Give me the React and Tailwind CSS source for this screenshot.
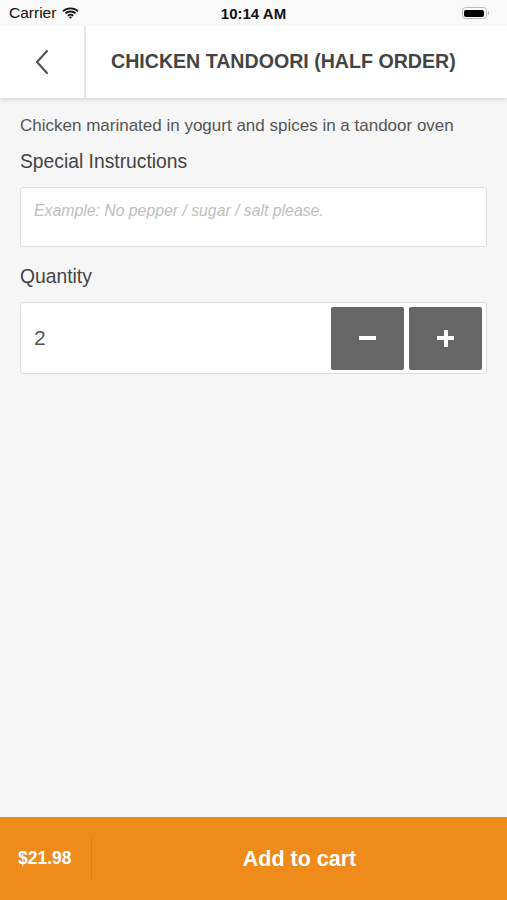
import React from "react";

export default function App() {
  return (
    <div
      className="w-[507px] h-[900px] flex flex-col bg-[#f6f6f6] overflow-hidden"
      style={{ fontFamily: '"Liberation Sans", Arial, sans-serif' }}
    >
      {/* Status bar */}
      <div className="h-[26px] bg-[#f9f9f9] flex items-center px-[9px] relative shrink-0">
        <div className="flex items-center gap-[6px]">
          <span className="text-[15.5px] text-[#111] leading-none">Carrier</span>
          <svg width="17" height="12" viewBox="0 0 17 12">
            <path d="M8.5 2.2c2.6 0 5 1 6.8 2.7l1.2-1.3C14.4 1.6 11.6.4 8.5.4S2.6 1.6.5 3.6l1.2 1.3C3.5 3.2 5.9 2.2 8.5 2.2z" fill="#111" />
            <path d="M8.5 5.4c1.7 0 3.2.6 4.4 1.7l1.2-1.3C12.6 4.4 10.6 3.6 8.5 3.6S4.4 4.4 2.9 5.8l1.2 1.3c1.2-1.1 2.7-1.7 4.4-1.7z" fill="#111" />
            <path d="M8.5 8.6c.8 0 1.5.3 2 .8l1.2-1.3c-.9-.8-2-1.3-3.2-1.3s-2.3.5-3.2 1.3l1.2 1.3c.5-.5 1.2-.8 2-.8z" fill="#111" />
            <path d="M8.5 11.8l1.6-1.7c-.4-.4-1-.6-1.6-.6s-1.2.2-1.6.6z" fill="#111" />
          </svg>
        </div>
        <span className="absolute left-0 right-0 text-center text-[15px] font-bold text-[#111] leading-none pointer-events-none">
          10:14 AM
        </span>
        <div className="ml-auto flex items-center mr-[9px]">
          <div className="w-[25px] h-[12px] rounded-[3.5px] border border-[#bbb] p-[1.5px]">
            <div className="w-full h-full rounded-[2px] bg-[#000]" />
          </div>
          <div className="w-[1.5px] h-[4px] bg-[#bbb] rounded-r-sm ml-[1px]" />
        </div>
      </div>

      {/* Header */}
      <div className="h-[72px] bg-white flex items-stretch shrink-0 shadow-[0_2px_4px_rgba(0,0,0,0.12)] relative z-10">
        <div className="w-[86px] flex items-center justify-center border-r-2 border-[#e6e6e6]">
          <svg width="16" height="26" viewBox="0 0 16 26" className="mr-[1px]">
            <path d="M13 2L3 13l10 11" fill="none" stroke="#555" strokeWidth="2.2" strokeLinecap="round" strokeLinejoin="round" />
          </svg>
        </div>
        <div className="flex items-center pl-[25px]">
          <span className="text-[19.6px] font-bold text-[#444]">
            CHICKEN TANDOORI (HALF ORDER)
          </span>
        </div>
      </div>

      {/* Content */}
      <div className="flex-1 px-[20px] pt-[18px] flex flex-col">
        <p className="text-[17px] text-[#555] leading-[20px]">
          Chicken marinated in yogurt and spices in a tandoor oven
        </p>
        <p className="text-[19.3px] text-[#444] mt-[15px] leading-[22px]">Special Instructions</p>
        <div className="mt-[14px] h-[60px] bg-white border border-[#dcdcdc] rounded-[3px] px-[13px] pt-[11px]">
          <span className="italic text-[15.8px] text-[#bdbdbd]">
            Example: No pepper / sugar / salt please.
          </span>
        </div>
        <p className="text-[19.3px] text-[#444] mt-[19px] leading-[22px]">Quantity</p>
        <div className="mt-[14px] h-[72px] bg-white border border-[#dcdcdc] rounded-[3px] flex items-center pl-[13px] pr-[4px]">
          <span className="text-[21px] text-[#555] flex-1">2</span>
          <div className="flex gap-[5px]">
            <button className="w-[73px] h-[63px] bg-[#666] rounded-[2px] flex items-center justify-center">
              <div className="w-[17px] h-[4px] bg-white" />
            </button>
            <button className="w-[73px] h-[63px] bg-[#666] rounded-[2px] flex items-center justify-center relative">
              <div className="w-[17px] h-[4px] bg-white" />
              <div className="w-[4px] h-[17px] bg-white absolute" />
            </button>
          </div>
        </div>
      </div>

      {/* Bottom bar */}
      <div className="h-[83px] bg-[#ee8b1a] flex items-center shrink-0">
        <div className="w-[92px] h-[42px] flex items-center pl-[18px] border-r border-[#dd7f12]">
          <span className="text-[17.5px] font-bold text-white">$21.98</span>
        </div>
        <div className="flex-1 flex items-center justify-center pt-[2px]">
          <span className="text-[21.5px] font-bold text-white">Add to cart</span>
        </div>
      </div>
    </div>
  );
}
